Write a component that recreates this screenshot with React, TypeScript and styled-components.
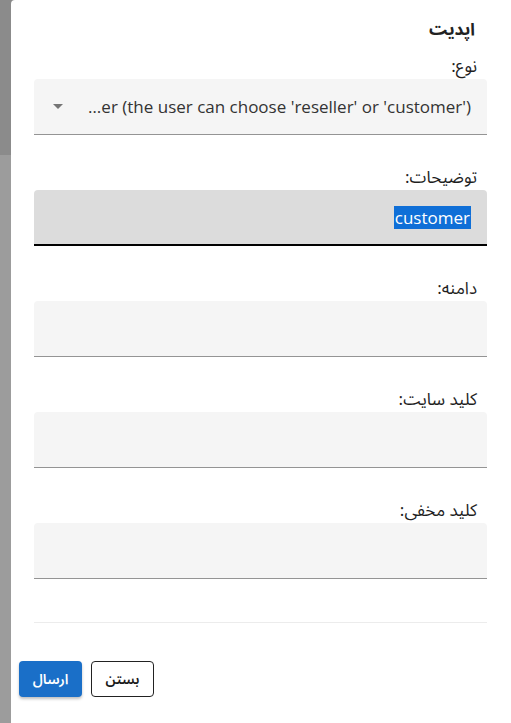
import React from "react";
import styled, { createGlobalStyle } from "styled-components";

const GlobalStyle = createGlobalStyle`
    html, body {
        margin: 0;
        padding: 0;
        height: 100%;
        overflow: hidden;
    }
    #root {
        height: 100%;
    }
`;

const arabicFont = `"Noto Sans Arabic", "Noto Sans Arabic UI", "Noto Naskh Arabic", "DejaVu Sans", sans-serif`;

const Backdrop = styled.div`
    display: flex;
    height: 100vh;
    background: linear-gradient(#8b8b8b 0 155px, #9c9c9c 155px);
`;

const Dialog = styled.div`
    flex: 1;
    margin-left: 11px;
    background-color: #ffffff;
    border-top-left-radius: 4px;
    direction: rtl;
    display: flex;
    flex-direction: column;
    font-family: ${arabicFont};
    color: #1f1f1f;
`;

const Content = styled.div`
    padding: 18px 24px 0 23px;
    display: flex;
    flex-direction: column;
`;

const Title = styled.h2`
    margin: 0 12px 0 0;
    font-size: 17px;
    font-weight: 700;
    line-height: 24px;
    color: #222222;
`;

const Field = styled.div<{ first?: boolean }>`
    display: flex;
    flex-direction: column;
    margin-top: ${(props) => (props.first ? "15px" : "33px")};
`;

const Label = styled.label`
    font-size: 17px;
    line-height: 20px;
    margin-right: 10px;
    margin-bottom: 2px;
`;

const Input = styled.div<{ focused?: boolean }>`
    height: ${(props) => (props.focused ? "54px" : "55px")};
    display: flex;
    align-items: center;
    padding: 0 16px;
    border-radius: 4px 4px 0 0;
    background-color: ${(props) => (props.focused ? "#dcdcdc" : "#f5f5f5")};
    border-bottom: ${(props) => (props.focused ? "2px solid #000000" : "1px solid #949494")};
    font-family: "Open Sans", "Liberation Sans", sans-serif;
    font-size: 17px;
    color: #222222;
`;

const SelectText = styled.span`
    flex: 1;
    direction: ltr;
    text-align: right;
    white-space: nowrap;
    overflow: hidden;
    color: #333333;
`;

const Arrow = styled.span`
    width: 0;
    height: 0;
    margin-left: 3px;
    margin-right: 18px;
    border-left: 5px solid transparent;
    border-right: 5px solid transparent;
    border-top: 5px solid #757575;
`;

const Selected = styled.span`
    direction: ltr;
    background-color: #0f6fd7;
    color: #ffffff;
    line-height: 23px;
    padding: 0 1px;
`;

const Divider = styled.hr`
    margin: 43px 0 0;
    border: none;
    border-top: 1px solid #ececec;
`;

const Actions = styled.div`
    display: flex;
    justify-content: flex-end;
    gap: 9px;
    padding: 38px 8px 0;
`;

const Button = styled.button<{ primary?: boolean }>`
    width: 63px;
    height: 36px;
    padding: 0;
    border-radius: 4px;
    font-family: ${arabicFont};
    font-size: 14px;
    font-weight: 600;
    cursor: pointer;
    background-color: ${(props) => (props.primary ? "#1a6fc8" : "#ffffff")};
    color: ${(props) => (props.primary ? "#ffffff" : "#1a1a1a")};
    border: ${(props) => (props.primary ? "none" : "1px solid #222222")};
    box-shadow: ${(props) =>
        props.primary ? "0 2px 3px rgba(0, 0, 0, 0.25)" : "none"};
`;

const fields = ["دامنه:", "کلید سایت:", "کلید مخفی:"];

const App: React.FC = () => {
    return (
        <>
            <GlobalStyle />
            <Backdrop>
                <Dialog>
                    <Content>
                        <Title>اپدیت</Title>
                        <Field first>
                            <Label>نوع:</Label>
                            <Input>
                                <SelectText>
                                    …er (the user can choose 'reseller' or 'customer')
                                </SelectText>
                                <Arrow />
                            </Input>
                        </Field>
                        <Field>
                            <Label>توضیحات:</Label>
                            <Input focused>
                                <Selected>customer</Selected>
                            </Input>
                        </Field>
                        {fields.map((label) => (
                            <Field key={label}>
                                <Label>{label}</Label>
                                <Input />
                            </Field>
                        ))}
                        <Divider />
                    </Content>
                    <Actions>
                        <Button>بستن</Button>
                        <Button primary>ارسال</Button>
                    </Actions>
                </Dialog>
            </Backdrop>
        </>
    );
};

export default App;
